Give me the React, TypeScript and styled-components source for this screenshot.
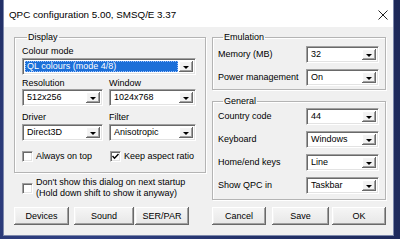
import React from 'react'
import styled, { createGlobalStyle, css } from 'styled-components'

const GlobalStyle = createGlobalStyle`
  html, body {
    margin: 0;
    padding: 0;
    background: #25336a;
  }
  body {
    font-family: 'Liberation Sans', Arial, sans-serif;
    font-size: 9px;
    color: #000;
  }
`

const Desktop = styled.div`
  width: 400px;
  height: 239px;
  background: radial-gradient(circle at 20% 80%, #33448a 0%, #24326a 45%, #1d2858 100%);
  padding-left: 3px;
  box-sizing: border-box;
  overflow: hidden;
`

const Window = styled.div`
  width: 391px;
  height: 236px;
  box-sizing: border-box;
  border: 1px solid #7d88ab;
  border-top: none;
  background: #f0f0f0;
  display: flex;
  flex-direction: column;
`

const TitleBar = styled.div`
  height: 27px;
  flex: none;
  background: #fff;
  display: flex;
  align-items: center;
  justify-content: space-between;
  padding: 2px 5px 0 5px;
  box-sizing: border-box;
`

const Title = styled.div`
  font-size: 9.8px;
  color: #000;
`

const CloseIcon = () => (
  <svg width="10" height="10" viewBox="0 0 10 10">
    <path d="M0.5 0.5 L9.5 9.5 M9.5 0.5 L0.5 9.5" stroke="#222" strokeWidth="1" />
  </svg>
)

const Body = styled.div`
  flex: 1;
  display: grid;
  grid-template-columns: 192px 174px;
  column-gap: 6px;
  padding: 5px 7px 10px 10px;
  min-height: 0;
`

const Column = styled.div`
  display: flex;
  flex-direction: column;
  min-height: 0;
`

const Group = styled.fieldset<{ $pad: string }>`
  margin: 0;
  min-width: 0;
  padding: ${p => p.$pad};
  border: 1px solid #b4b4b4;
  box-shadow: 1px 1px 0 #fff, inset 1px 1px 0 #fff;
  display: flex;
  flex-direction: column;
  & + & {
    margin-top: 6px;
  }
`

const Legend = styled.legend`
  line-height: 11px;
  padding: 0 1px;
  margin-left: 5px;
`

const Label = styled.div<{ $mt?: number }>`
  line-height: 11px;
  height: 11px;
  white-space: nowrap;
  margin-top: ${p => p.$mt ?? 0}px;
`

const Pair = styled.div<{ $mt?: number }>`
  display: grid;
  grid-template-columns: 81px 87px;
  column-gap: 6px;
  margin-top: ${p => p.$mt ?? 0}px;
`

const sunken = css`
  border: 1px solid;
  border-color: #a0a0a0 #fff #fff #a0a0a0;
  box-shadow: inset 1px 1px 0 #696969, inset -1px -1px 0 #e3e3e3;
`

const raised = css`
  box-shadow: inset -1px -1px 0 #696969, inset 1px 1px 0 #fff,
    inset -2px -2px 0 #a0a0a0, inset 2px 2px 0 #f4f4f4;
`

const ComboBox = styled.div<{ $mt?: number }>`
  ${sunken};
  height: 17px;
  box-sizing: border-box;
  background: #fff;
  display: flex;
  align-items: stretch;
  padding: 2px;
  margin-top: ${p => p.$mt ?? 0}px;
`

const ComboText = styled.div<{ $selected?: boolean }>`
  flex: 1;
  line-height: 11px;
  padding: 0 2px;
  white-space: nowrap;
  overflow: hidden;
  ${p =>
    p.$selected &&
    css`
      background: #1c6fd8;
      color: #fff;
      outline: 1px dotted #9cc2ff;
      outline-offset: -1px;
      margin-right: 1px;
    `}
`

const DropButton = styled.div`
  width: 14px;
  flex: none;
  background: #f2f2f2;
  ${raised};
  display: flex;
  align-items: center;
  justify-content: center;
`

const Arrow = styled.div`
  width: 0;
  height: 0;
  border-left: 3px solid transparent;
  border-right: 3px solid transparent;
  border-top: 3px solid #000;
  margin-top: 1px;
`

const Combo = ({ value, selected, mt }: { value: string; selected?: boolean; mt?: number }) => (
  <ComboBox $mt={mt}>
    <ComboText $selected={selected}>{value}</ComboText>
    <DropButton>
      <Arrow />
    </DropButton>
  </ComboBox>
)

const Row = styled.div<{ $mt?: number }>`
  display: grid;
  grid-template-columns: 1fr 73px;
  align-items: center;
  margin-top: ${p => p.$mt ?? 0}px;
`

const CheckRow = styled.div<{ $mt?: number }>`
  display: flex;
  align-items: center;
  height: 13px;
  margin-top: ${p => p.$mt ?? 0}px;
`

const CheckItem = styled.label<{ $w?: number }>`
  display: flex;
  align-items: center;
  gap: 3px;
  width: ${p => (p.$w ? `${p.$w}px` : 'auto')};
  white-space: nowrap;
  line-height: 11px;
`

const Box = styled.span`
  ${sunken};
  width: 11px;
  height: 11px;
  box-sizing: border-box;
  background: #fff;
  flex: none;
  display: flex;
  align-items: center;
  justify-content: center;
`

const CheckBox = ({ checked }: { checked?: boolean }) => (
  <Box>
    {checked && (
      <svg width="7" height="7" viewBox="0 0 7 7">
        <path d="M0.5 3 L2.5 5.2 L6.5 1" stroke="#000" strokeWidth="1.4" fill="none" />
      </svg>
    )}
  </Box>
)

const StartupNote = styled.div`
  display: flex;
  align-items: center;
  gap: 3px;
  margin-top: 4px;
  padding-left: 8px;
  line-height: 11px;
`

const ButtonRow = styled.div`
  display: flex;
  margin-top: auto;
`

const Button = styled.button<{ $w: number; $ml?: number }>`
  width: ${p => p.$w}px;
  height: 18px;
  margin-left: ${p => p.$ml ?? 0}px;
  padding: 0;
  border: none;
  background: linear-gradient(#f6f6f6, #e6e6e6);
  ${raised};
  font-family: 'Liberation Sans', Arial, sans-serif;
  font-size: 9px;
  color: #000;
`

export default function App() {
  return (
    <>
      <GlobalStyle />
      <Desktop>
        <Window>
          <TitleBar>
            <Title>QPC configuration 5.00, SMSQ/E 3.37</Title>
            <CloseIcon />
          </TitleBar>
          <Body>
            <Column>
              <Group $pad="3px 9px 9px 7px">
                <Legend>Display</Legend>
                <Label>Colour mode</Label>
                <Combo value="QL colours (mode 4/8)" selected mt={1} />
                <Pair $mt={3}>
                  <Label>Resolution</Label>
                  <Label>Window</Label>
                </Pair>
                <Pair>
                  <Combo value="512x256" />
                  <Combo value="1024x768" />
                </Pair>
                <Pair $mt={6}>
                  <Label>Driver</Label>
                  <Label>Filter</Label>
                </Pair>
                <Pair $mt={1}>
                  <Combo value="Direct3D" />
                  <Combo value="Anisotropic" />
                </Pair>
                <CheckRow $mt={9}>
                  <CheckItem $w={88}>
                    <CheckBox />
                    Always on top
                  </CheckItem>
                  <CheckItem>
                    <CheckBox checked />
                    Keep aspect ratio
                  </CheckItem>
                </CheckRow>
              </Group>
              <StartupNote>
                <CheckBox />
                <div>
                  Don't show this dialog on next startup
                  <br />
                  (Hold down shift to show it anyway)
                </div>
              </StartupNote>
              <ButtonRow>
                <Button $w={55}>Devices</Button>
                <Button $w={60} $ml={5}>Sound</Button>
                <Button $w={54} $ml={1}>SER/PAR</Button>
              </ButtonRow>
            </Column>
            <Column>
              <Group $pad="3px 6px 3px 5px">
                <Legend>Emulation</Legend>
                <Row>
                  <Label>Memory (MB)</Label>
                  <Combo value="32" />
                </Row>
                <Row $mt={6}>
                  <Label>Power management</Label>
                  <Combo value="On" />
                </Row>
              </Group>
              <Group $pad="1px 6px 5px 5px">
                <Legend>General</Legend>
                <Row>
                  <Label>Country code</Label>
                  <Combo value="44" />
                </Row>
                <Row $mt={6}>
                  <Label>Keyboard</Label>
                  <Combo value="Windows" />
                </Row>
                <Row $mt={6}>
                  <Label>Home/end keys</Label>
                  <Combo value="Line" />
                </Row>
                <Row $mt={6}>
                  <Label>Show QPC in</Label>
                  <Combo value="Taskbar" />
                </Row>
              </Group>
              <ButtonRow>
                <Button $w={54}>Cancel</Button>
                <Button $w={57} $ml={6}>Save</Button>
                <Button $w={54} $ml={3}>OK</Button>
              </ButtonRow>
            </Column>
          </Body>
        </Window>
      </Desktop>
    </>
  )
}
